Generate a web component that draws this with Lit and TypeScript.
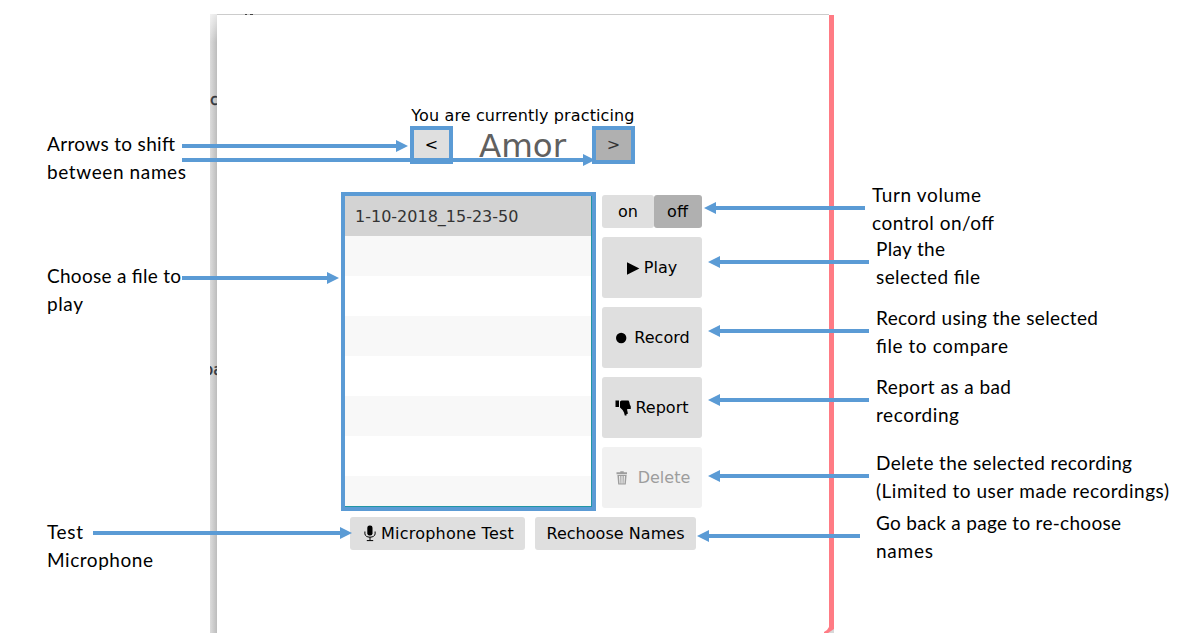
import { LitElement, html, css, svg } from "lit";
import { customElement } from "lit/decorators.js";

type Label = { x: number; y: number; w: number; text: string };
type Arrow = { from: number; to: number; y: number };

const LABELS: Label[] = [
  { x: 47, y: 151, w: 128, text: "Arrows to shift" },
  { x: 47, y: 179, w: 139, text: "between names" },
  { x: 47, y: 283, w: 134, text: "Choose a file to" },
  { x: 47, y: 311, w: 36, text: "play" },
  { x: 47, y: 539, w: 36, text: "Test" },
  { x: 47, y: 567, w: 106, text: "Microphone" },
  { x: 872, y: 202, w: 109, text: "Turn volume" },
  { x: 872, y: 230, w: 122, text: "control on/off" },
  { x: 876, y: 256, w: 69, text: "Play the" },
  { x: 876, y: 284, w: 104, text: "selected file" },
  { x: 876, y: 325, w: 222, text: "Record using the selected" },
  { x: 876, y: 353, w: 132, text: "file to compare" },
  { x: 876, y: 394, w: 135, text: "Report as a bad" },
  { x: 876, y: 422, w: 83, text: "recording" },
  { x: 876, y: 470, w: 256, text: "Delete the selected recording" },
  { x: 876, y: 498, w: 293, text: "(Limited to user made recordings)" },
  { x: 876, y: 530, w: 245, text: "Go back a page to re-choose" },
  { x: 876, y: 558, w: 57, text: "names" },
];

const ARROWS: Arrow[] = [
  { from: 182, to: 408, y: 146 },
  { from: 182, to: 595, y: 160 },
  { from: 182, to: 339, y: 278 },
  { from: 93, to: 352, y: 533 },
  { from: 865, to: 704, y: 208 },
  { from: 869, to: 708, y: 262 },
  { from: 869, to: 708, y: 331 },
  { from: 869, to: 708, y: 400 },
  { from: 869, to: 708, y: 476 },
  { from: 860, to: 697, y: 536 },
];

@customElement("annotation-layer")
export class AnnotationLayer extends LitElement {
  static styles = css`
    :host { display: block; }
    .layer { display: block; }
    .label { font-family: Lato, "Liberation Sans", sans-serif; font-size: 19px; fill: #000; }
    .line { stroke: #5b9bd5; stroke-width: 4; }
    .head { fill: #5b9bd5; }
  `;

  private arrow({ from, to, y }: Arrow) {
    const back = to > from ? to - 12 : to + 12;
    return svg`
      <line class="line" x1=${from} y1=${y} x2=${back} y2=${y}></line>
      <polygon class="head" points="${back},${y - 6} ${to},${y} ${back},${y + 6}"></polygon>`;
  }

  render() {
    return html`<svg class="layer" width="1180" height="643" viewBox="0 0 1180 643">
      ${ARROWS.map((a) => this.arrow(a))}
      ${LABELS.map(
        (l) => svg`<text class="label" x=${l.x} y=${l.y} textLength=${l.w}>${l.text}</text>`
      )}
    </svg>`;
  }
}

@customElement("practice-panel")
export class PracticePanel extends LitElement {
  static styles = css`
    :host { display: flex; flex-direction: column; box-sizing: border-box; padding-top: 90px; color: #000; font: 16px/20px "DejaVu Sans", sans-serif; }
    .title { text-align: center; height: 21px; line-height: 21px; white-space: nowrap; letter-spacing: 0.12px; }
    .switcher { display: flex; justify-content: space-between; width: 225px; height: 38px; margin-left: 193px; }
    .nav { box-sizing: border-box; width: 43px; border: 4px solid #5b9bd5; background: #dfdfdf; display: flex; align-items: center; justify-content: center; }
    .nav.dark { background: #b0b0b0; color: #333; }
    .name { font-size: 32.5px; line-height: 41px; color: #606060; }
    .main { display: flex; gap: 6px; margin: 28px 0 0 124px; }
    .list { box-sizing: border-box; width: 255px; height: 319px; border: 4px solid #5b9bd5; overflow: hidden; }
    .rows { box-sizing: border-box; height: 311px; border: solid #2196a5; border-width: 0 1px 1px 0; overflow: hidden; }
    .row { height: 40px; box-sizing: border-box; padding-left: 10px; line-height: 41px; color: #333; }
    .row:nth-child(even) { background: #f8f8f8; }
    .row.selected { background: #d3d3d3; }
    .side { display: flex; flex-direction: column; gap: 9px; width: 100px; padding-top: 3px; }
    .toggle { display: flex; height: 33px; }
    .btn { background: #dfdfdf; border-radius: 3px; display: flex; align-items: center; justify-content: center; white-space: nowrap; }
    .on { width: 52px; }
    .off { width: 48px; background: #b0b0b0; box-sizing: border-box; padding-right: 1px; }
    .big { height: 61px; flex: none; }
    .disabled { background: #f1f1f1; color: #9d9d9d; }
    .footer { display: flex; gap: 10px; margin: 6px 0 0 133px; }
    .mic { width: 175px; height: 33px; letter-spacing: 0.22px; box-sizing: border-box; padding-left: 3px; }
    .names { width: 161px; height: 33px; letter-spacing: 0.04px; }
    .icon { flex: none; fill: currentColor; }
    .g5 { gap: 5px; }
    .g4 { gap: 4px; }
    .g7 { gap: 7px; }
    .g10 { gap: 10px; }
    .nudge { box-sizing: border-box; padding-left: 2px; }
  `;

  render() {
    const play = html`<svg class="icon" width="13" height="14"><path d="M0 1.3v12.4L12.4 7.5z" /></svg>`;
    const record = html`<svg class="icon" width="11" height="12"><circle cx="5.2" cy="6" r="5.2" /></svg>`;
    const thumb = html`<svg class="icon" width="16" height="16" viewBox="0 0 16 16"><path d="M.5 .5H4v6.5H.5zM5 1.5L6.5 .5H13.5l.8 1.5.5 2.5 1 2V9H12.2v1.5l.5 2V14H11.5v1.5H9.8L9 12.5 7.6 10 5 7.5z" /></svg>`;
    const trash = html`<svg class="icon" width="12" height="14" viewBox="0 0 12 14"><path d="M.5 1.2h3.8V.2h3.4v1H11v2H.5zM1.4 4h9.2l-.8 9.6H2.2zM3 5l.5 7.4h1L4.2 5zm2.4 0v7.4h1.2V5zm2.4 0l-.3 7.4h1L9 5z" fill-rule="evenodd" /></svg>`;
    const mic = html`<svg class="icon" width="12" height="17" viewBox="0 0 12 17"><rect x="3.3" y="0.5" width="5.2" height="10" rx="2.3" /><path d="M.9 6.5v2.4Q1.3 12 6 12.2q4.7-.2 5.1-3.3V6.5M6 12.2V15M2.8 15.6h6.4" fill="none" stroke="currentColor" stroke-width="1" /></svg>`;
    return html`
      <div class="title">You are currently practicing</div>
      <div class="switcher">
        <div class="nav">&lt;</div>
        <div class="name">Amor</div>
        <div class="nav dark">&gt;</div>
      </div>
      <div class="main">
        <div class="list">
          <div class="rows">
            <div class="row selected">1-10-2018_15-23-50</div>
            ${Array.from({ length: 7 }, () => html`<div class="row"></div>`)}
          </div>
        </div>
        <div class="side">
          <div class="toggle"><div class="btn on">on</div><div class="btn off">off</div></div>
          <div class="btn big g4">${play}<span>Play</span></div>
          <div class="btn big g7 nudge">${record}<span>Record</span></div>
          <div class="btn big g4">${thumb}<span>Report</span></div>
          <div class="btn big g10 disabled nudge">${trash}<span>Delete</span></div>
        </div>
      </div>
      <div class="footer">
        <div class="btn mic g5">${mic}<span>Microphone Test</span></div>
        <div class="btn names">Rechoose Names</div>
      </div>
    `;
  }
}

@customElement("app-root")
export class AppRoot extends LitElement {
  static styles = css`
    :host { display: block; position: relative; box-sizing: border-box; width: 1180px; height: 643px; padding: 14px 0 0 210px; background: #fff; overflow: hidden; }
    .frame { display: flex; width: 624px; height: 619px; }
    .shadow { width: 7px; flex: none; overflow: hidden; background: linear-gradient(180deg, rgba(255,255,255,.65), rgba(255,255,255,0) 28px), linear-gradient(90deg, #dcdcdc, #bcbcbc); font: 16px/20px "DejaVu Sans", sans-serif; color: #30343b; }
    .peek { height: 20px; white-space: nowrap; }
    .first { margin-top: 76px; -webkit-text-stroke: 0.4px #30343b; }
    .second { margin-top: 250px; text-indent: -7px; -webkit-text-stroke: 0.4px #30343b; }
    .panel { width: 612px; box-sizing: border-box; border-top: 1px solid #ccc; }
    .edge { width: 5px; flex: none; margin-top: 1px; background: #ff7b84; }
    .corner { position: absolute; left: 823px; top: 627px; }
    .speck { position: absolute; left: 244px; top: 14px; }
    .notes { position: absolute; inset: 0; }
  `;

  render() {
    return html`
      <div class="frame">
        <div class="shadow"><div class="peek first">c</div><div class="peek second">pa</div></div>
        <practice-panel class="panel"></practice-panel>
        <div class="edge"></div>
      </div>
      <svg class="speck" width="10" height="1"><path d="M1 0h2v1H1zM6 0h3v1H6z" fill="#444" /></svg>
      <svg class="corner" width="11" height="6"><path d="M11 0v6H4z" fill="#d8d8d8" /><path d="M6 0h5v2L8 4 5 6H1V5l3-2z" fill="#ff7b84" /></svg>
      <annotation-layer class="notes"></annotation-layer>
    `;
  }
}
